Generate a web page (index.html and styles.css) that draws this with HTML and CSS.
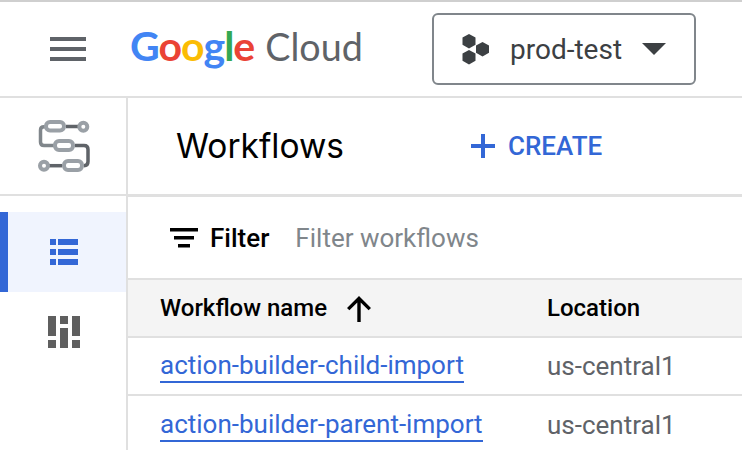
FILE: index.html
```html
<!DOCTYPE html>
<html lang="en">
<head>
<meta charset="utf-8">
<title>Workflows</title>
<link rel="stylesheet" href="styles.css">
</head>
<body>
<div class="page">
  <header class="topbar">
    <svg class="menu" width="36" height="24" viewBox="0 0 36 24"><path d="M0 0h36v4H0zM0 10h36v4H0zM0 20h36v4H0z" fill="#5f6368"/></svg>
    <div class="logo"><span class="lg"><span class="b">G</span><span class="r">o</span><span class="y">o</span><span class="b">g</span><span class="g">l</span><span class="r">e</span></span> <span class="cloud">Cloud</span></div>
    <div class="project">
      <svg class="hex" width="28" height="32" viewBox="0 0 28 32"><path fill="#3c4043" d="M7 1l6.500 3.600v7.200L7 15.400.5 11.800V4.600zM7 17l6.500 3.600v7.200L7 31.400.5 27.800V20.600zM20.500 9l6.500 3.600v7.200L20.500 23.400 14 19.800V12.600z"/></svg>
      <span class="pname">prod-test</span>
      <svg width="24" height="12" viewBox="0 0 24 12"><path d="M0 0h24L12 12z" fill="#3c4043"/></svg>
    </div>
  </header>
  <div class="body">
    <nav class="side">
      <div class="side-top">
        <svg width="56" height="56" viewBox="36 118 56 56" fill="none">
          <path d="M66 126.500H79" stroke="#5f6368" stroke-width="3.500"/>
          <path d="M46 126.700H44Q40.500 126.700 40.500 130V142Q40.500 145.500 44 145.500H55" stroke="#80868b" stroke-width="3.500"/>
          <path d="M75 145.500H84Q88 145.500 88 149.500V161.500Q88 165.700 84 165.700" stroke="#5f6368" stroke-width="3.500"/>
          <path d="M48 165.700H62" stroke="#5f6368" stroke-width="3.500"/>
          <rect x="46" y="122" width="18" height="8.500" rx="4" fill="#fff" stroke="#9aa0a6" stroke-width="4"/>
          <rect x="55" y="141" width="18" height="9" rx="4" fill="#fff" stroke="#9aa0a6" stroke-width="4"/>
          <rect x="64" y="161" width="18" height="9" rx="4" fill="#fff" stroke="#9aa0a6" stroke-width="4"/>
          <circle cx="83.300" cy="126.700" r="4" fill="#fff" stroke="#9aa0a6" stroke-width="4"/>
          <circle cx="44" cy="165.700" r="4" fill="#fff" stroke="#9aa0a6" stroke-width="4"/>
        </svg>
      </div>
      <div class="side-item active">
        <svg width="28" height="26" viewBox="0 0 28 26"><path fill="#3367d6" d="M0 0h6v6H0zM8 0h20v6H8zM0 10h6v6H0zM8 10h20v6H8zM0 20h6v6H0zM8 20h20v6H8z"/></svg>
      </div>
      <div class="side-item">
        <svg width="32" height="32" viewBox="0 0 32 32"><path fill="#5f5f5f" d="M0 0h8v20H0zM0 24h8v8H0zM12 0h8v8h-8zM12 12h8v20h-8zM24 0h8v20h-8zM24 24h8v8h-8z"/></svg>
      </div>
    </nav>
    <main class="main">
      <section class="titlebar">
        <h1 class="title">Workflows</h1>
        <div class="create">
          <svg width="24" height="24" viewBox="0 0 24 24"><path fill="#3367d6" d="M10 0h4v10h10v4H14v10h-4V14H0v-4h10z"/></svg>
          <span>CREATE</span>
        </div>
      </section>
      <section class="filter">
        <svg width="28" height="20" viewBox="0 0 28 20"><path fill="#000" d="M0 0h28v3.500H0zM4 8h20v3.500H4zM8 16h12v3.500H8z"/></svg>
        <span class="flabel">Filter</span>
        <span class="fhint">Filter workflows</span>
      </section>
      <div class="table">
        <div class="row head">
          <div class="c1"><span>Workflow name</span>
            <svg class="arrow" width="24" height="26" viewBox="0 0 24 26"><path fill="#000" d="M10.300 26V6.500L2.400 14.300 0 12 12 0l12 12-2.400 2.300-7.900-7.800V26z"/></svg>
          </div>
          <div class="c2">Location</div>
        </div>
        <div class="row">
          <div class="c1"><a class="link">action-builder-child-import</a></div>
          <div class="c2 loc">us-central1</div>
        </div>
        <div class="row last">
          <div class="c1"><a class="link">action-builder-parent-import</a></div>
          <div class="c2 loc">us-central1</div>
        </div>
      </div>
    </main>
  </div>
</div>
</body>
</html>
```

FILE: styles.css
```css
* { box-sizing: border-box; }
html, body { margin: 0; padding: 0; background: #fff; }
body { font-family: Roboto, "Liberation Sans", sans-serif; }
.page { width: 742px; height: 450px; overflow: hidden; display: flex; flex-direction: column; }

.topbar { height: 98px; flex: none; border-top: 2px solid #cfcfcf; border-bottom: 2px solid #e0e0e0; display: flex; align-items: center; padding-left: 50px; }
.menu { flex: none; }
.logo { margin-left: 44px; padding-bottom: 5px; white-space: nowrap; display: flex; align-items: baseline; width: 302px; }
.lg { font-family: Lato, sans-serif; font-weight: 700; font-size: 41px; letter-spacing: -1px; line-height: 48px; }
.cloud { font-family: Lato, sans-serif; font-size: 37.700px; color: #5f6368; margin-left: 11px; line-height: 48px; }
.b { color: #4285f4; } .r { color: #ea4335; } .y { color: #fbbc04; } .g { color: #34a853; }
.project { width: 264px; height: 72px; flex: none; border: 2px solid #80868b; border-radius: 6px; display: flex; align-items: center; padding-left: 28px; color: #3c4043; }
.hex { flex: none; }
.pname { font-size: 28px; margin-left: 20px; width: 132px; }

.body { flex: 1; display: flex; min-height: 0; }
.side { width: 128px; flex: none; border-right: 2px solid #e0e0e0; }
.side-top { height: 98px; border-bottom: 2px solid #e0e0e0; display: flex; align-items: center; justify-content: center; margin-bottom: 16px; padding-left: 2px; }
.side-item { height: 80px; display: flex; align-items: center; justify-content: center; padding-left: 2px; }
.side-item.active { background: #f0f4fe; border-left: 8px solid #3367d6; padding-left: 0; padding-right: 6px; }

.main { flex: 1; min-width: 0; }
.titlebar { height: 99px; border-bottom: 3px solid #e0e0e0; display: flex; align-items: center; padding-left: 48px; }
.title { margin: 0; font-family: Inter, Roboto, sans-serif; font-weight: 400; font-size: 33.500px; color: #000; width: 295px; }
.create { display: flex; align-items: center; gap: 13px; color: #3367d6; font-size: 26px; font-weight: 500; }
.filter { height: 81px; display: flex; align-items: center; padding-left: 42px; }
.flabel { font-size: 26px; font-weight: 500; color: #000; margin-left: 12px; }
.fhint { font-size: 26px; color: #80868b; margin-left: 26px; }

.table { border-top: 2px solid #e0e0e0; }
.row { display: grid; grid-template-columns: 387px 1fr; align-items: center; height: 58px; padding-left: 32px; border-bottom: 2px solid #e0e0e0; font-size: 26px; }
.row.head { background: #f4f4f4; font-size: 24px; font-weight: 500; color: #000; }
.row.last { border-bottom: 0; }
.c1 { display: flex; align-items: center; gap: 20px; white-space: nowrap; }
.arrow { margin-top: 2px; }
.link { color: #3367d6; border-bottom: 2px solid #3367d6; line-height: 32px; }
.loc { color: #5f6368; }
```
